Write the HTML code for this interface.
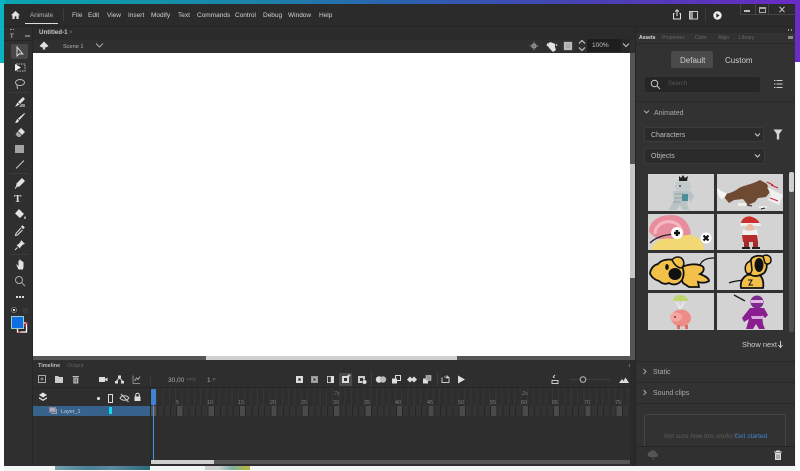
<!DOCTYPE html>
<html><head><meta charset="utf-8"><style>
html,body{margin:0;padding:0}
body{width:800px;height:471px;overflow:hidden;position:relative;background:#f4f5f5;font-family:"Liberation Sans",sans-serif;color:#bbb}
div,span,svg{position:absolute}
#w{left:0;top:0;width:800px;height:471px;filter:blur(.35px);overflow:hidden}
.t{white-space:nowrap;line-height:10px}
.m{font-size:6.5px;color:#d2d2d2;top:10.500px}
.th{background:#d3d3d3;overflow:hidden}
.ic{fill:#e2e2e2;stroke:none}
.st{fill:none;stroke:#e2e2e2;stroke-width:1}
.r{font-size:5.500px;color:#7d7d7d;top:397.500px}
</style></head><body><div id="w">
<div style="left:0;top:0;width:800px;height:5px;background:linear-gradient(90deg,#0aa5b0 0,#1a86a8 30%,#2c62b0 50%,#4a3fb4 75%,#6a2bc4 100%)"></div>
<div style="left:0;top:0;width:5px;height:63px;background:#08b4c4"></div>
<div style="left:795px;top:0;width:5px;height:62px;background:#6a2bc8"></div>
<div style="left:0;top:63px;width:4px;height:408px;background:#fdfdfd"></div>
<div style="left:796px;top:62px;width:4px;height:409px;background:#fdfdfd"></div>
<!-- bottom strip -->
<div style="left:55px;top:465px;width:95px;height:4.500px;background:linear-gradient(90deg,#7ba0ac,#4a8098 35%,#5d8aa0 60%,#2d6a78)"></div>
<div style="left:205px;top:465px;width:45px;height:4.500px;background:linear-gradient(100deg,#d0d0d0 30%,#7db0a8 60%,#b5b548 90%)"></div>
<!-- window -->
<div style="left:4px;top:4px;width:791px;height:461.500px;background:#2f2f2f"></div>
<div style="left:4px;top:4px;width:791px;height:23px;background:#2b2b2b"></div>
<div style="left:4px;top:26px;width:791px;height:1px;background:#242424"></div>
<!-- title bar -->
<svg style="left:10px;top:10px" width="11" height="10" viewBox="0 0 11 10"><path class="ic" d="M5.500 1L1 5.200h1.400V9h2.200V6.400h1.800V9h2.200V5.200H10z"/></svg>
<span class="t" style="left:30px;top:10.500px;font-size:6.300px;color:#b5b5b5">Animate</span>
<div style="left:25px;top:23px;width:33px;height:1px;background:#ddd"></div>
<div style="left:63px;top:9px;width:1px;height:12px;background:#3c3c3c"></div>
<span class="t m" style="left:72px">File</span>
<span class="t m" style="left:88px">Edit</span>
<span class="t m" style="left:107px">View</span>
<span class="t m" style="left:128px">Insert</span>
<span class="t m" style="left:151px">Modify</span>
<span class="t m" style="left:178px">Text</span>
<span class="t m" style="left:197px">Commands</span>
<span class="t m" style="left:235px">Control</span>
<span class="t m" style="left:263px">Debug</span>
<span class="t m" style="left:288px">Window</span>
<span class="t m" style="left:319px">Help</span>
<svg style="left:672px;top:9px" width="10" height="11" viewBox="0 0 10 11"><path class="st" d="M2.500 4.500H1.500v5.500h7V4.500H7.500M5 7V1M3.200 2.600L5 .8l1.800 1.800"/></svg>
<svg style="left:689px;top:11px" width="10" height="9" viewBox="0 0 10 9"><rect x=".5" y=".5" width="8" height="7.500" fill="none" stroke="#ccc"/><rect x="1" y="1" width="3" height="6.500" fill="#999"/></svg>
<div style="left:705px;top:8px;width:1px;height:14px;background:#3a3a3a"></div>
<svg style="left:713px;top:11px" width="9" height="9" viewBox="0 0 9 9"><circle cx="4.500" cy="4.500" r="4.200" fill="#eee"/><path d="M3.300 2.300v4.400l3.300-2.200z" fill="#2b2b2b"/></svg>
<div style="left:740px;top:4px;width:55px;height:10px;border-bottom:1px solid #444;border-left:1px solid #444"></div>
<div style="left:744px;top:10px;width:6px;height:1.500px;background:#bbb"></div>
<div style="left:755px;top:4px;width:1px;height:10px;background:#444"></div>
<div style="left:768px;top:4px;width:1px;height:10px;background:#444"></div>
<div style="left:759px;top:7px;width:5px;height:3px;border:1px solid #aaa;border-top-width:2px"></div>
<svg style="left:778px;top:6px" width="8" height="7" viewBox="0 0 8 7"><path d="M1.500 .8l5 5.400M6.500 .8l-5 5.400" stroke="#ccc" fill="none"/></svg>
<!-- toolbar -->
<div style="left:4px;top:27px;width:29px;height:439px;background:#2f2f2f"></div>
<div style="left:32px;top:27px;width:1px;height:439px;background:#262626"></div>
<div style="left:4px;top:40px;width:28px;height:1px;background:#262626"></div>
<div style="left:10px;top:29px;width:4px;height:1px;border-top:1px dotted #999"></div>
<span class="t" style="left:10px;top:32px;font-size:6px;font-weight:bold;color:#aaa">T</span>
<div style="left:25px;top:35px;width:5px;height:2px;background:#777"></div>
<div style="left:11px;top:44px;width:17px;height:15px;background:#484848;border-radius:2px"></div>
<svg style="left:14px;top:46px" width="12" height="12" viewBox="0 0 12 12"><path d="M3 1v9l2.500-2.200L8.800 8z" fill="none" stroke="#ddd"/></svg>
<svg style="left:14px;top:62px" width="13" height="11" viewBox="0 0 13 11"><rect x="2" y="2" width="9" height="7" fill="none" stroke="#bbb" stroke-dasharray="1.500 1"/><path d="M1 2l6 3.500L1 9z" fill="#eee"/></svg>
<svg style="left:14px;top:78px" width="12" height="12" viewBox="0 0 12 12"><ellipse cx="6" cy="4.500" rx="4.500" ry="3" fill="none" stroke="#bbb"/><path d="M3 7c-.5 2 1 2.500.5 4" fill="none" stroke="#bbb"/></svg>
<div style="left:9px;top:92px;width:20px;height:1px;background:#3a3a3a"></div>
<svg style="left:14px;top:96px" width="12" height="12" viewBox="0 0 12 12"><path class="ic" d="M9 1l2 2-5 5-2-2zM3.500 6.500l2 2L1 11z"/><path d="M7 8l4 0 0 3-6 0z" fill="#888"/></svg>
<svg style="left:14px;top:112px" width="12" height="12" viewBox="0 0 12 12"><path class="ic" d="M10.500 1L11 1.800 5.500 8 4 6.500zM3.500 7l1.500 1.500C4.500 10.500 2.500 11 1 11c1-.8 1-3 2.500-4z"/></svg>
<svg style="left:14px;top:127px" width="12" height="12" viewBox="0 0 12 12"><path class="ic" d="M7 1l4 4-3 3-4-4z"/><path d="M3.500 4.500l4 4-1.500 1.500H4L1.500 7.500z" fill="#aaa"/></svg>
<div style="left:15px;top:145px;width:9px;height:8px;background:#a3a3a3"></div>
<svg style="left:14px;top:158px" width="12" height="12" viewBox="0 0 12 12"><path d="M2 10.500L10 2.500" stroke="#ccc"/></svg>
<div style="left:9px;top:173px;width:20px;height:1px;background:#3a3a3a"></div>
<svg style="left:14px;top:177px" width="12" height="12" viewBox="0 0 12 12"><path class="ic" d="M8 1l3 3-5.500 5.500L2 10l.5-3.500z"/><path d="M1 11.500L4 8" stroke="#ddd"/></svg>
<span class="t" style="left:14px;top:194px;font-size:11px;line-height:11px;font-family:'Liberation Serif',serif;font-weight:bold;color:#ddd">T</span>
<svg style="left:14px;top:208px" width="13" height="12" viewBox="0 0 13 12"><path class="ic" d="M5 1l5 5-4 4-5-4.500zM11 8c1 1.500 1 3 0 3s-1-1.500 0-3z"/></svg>
<svg style="left:14px;top:224px" width="12" height="13" viewBox="0 0 12 13"><path class="ic" d="M8.500 1.200l2.300 2.300-1.600 1.600-2.300-2.300z"/><path d="M7 4L2 9.500 1.500 11.500l2-.5L8.500 6" fill="none" stroke="#ddd"/></svg>
<svg style="left:14px;top:239px" width="12" height="12" viewBox="0 0 12 12"><path class="ic" d="M7 1l4 4-2 .5L6.500 8 6 9.500 2.500 6 4 5.500 6.500 3z"/><path d="M3.500 8.500L1 11" stroke="#ddd"/></svg>
<div style="left:9px;top:254px;width:20px;height:1px;background:#3a3a3a"></div>
<svg style="left:14px;top:258px" width="12" height="13" viewBox="0 0 12 13"><path class="ic" d="M2 6l2.500 2V2.500h1V1.500h1v1h1V3h1v1h1v5L9 11.500H4.500z"/></svg>
<svg style="left:14px;top:275px" width="12" height="12" viewBox="0 0 12 12"><circle cx="5" cy="5" r="3.500" fill="none" stroke="#aaa"/><path d="M7.500 7.500L11 11" stroke="#aaa"/></svg>
<div style="left:16px;top:296px;width:2px;height:2px;background:#ddd"></div><div style="left:19px;top:296px;width:2px;height:2px;background:#ddd"></div><div style="left:22px;top:296px;width:2px;height:2px;background:#ddd"></div>
<div style="left:11px;top:307px;width:6px;height:6px;border-radius:50%;background:radial-gradient(#fff 35%,#222 40%);border:1px solid #777;box-sizing:border-box"></div>
<div style="left:23px;top:308px;width:5px;height:5px;background:#3a3a3a"></div>
<svg style="left:16px;top:320px" width="12" height="14" viewBox="0 0 12 14"><rect x="1.500" y="3" width="9" height="9" fill="#2a2a2a" stroke="#fff" stroke-width="1.300"/><path d="M11 2L7 8" stroke="#d22" stroke-width="1.200"/><path d="M5 11L2 13" stroke="#d22" stroke-width="1"/></svg>
<div style="left:11px;top:316px;width:11px;height:11px;background:#0f6fe0;border:.5px solid #9cc"></div>
<!-- document tab row -->
<div style="left:33px;top:27px;width:603px;height:13px;background:#2b2b2b"></div>
<span class="t" style="left:39px;top:27.500px;font-size:6.200px;font-weight:bold;color:#c8c8c8">Untitled-1</span>
<span class="t" style="left:69px;top:28px;font-size:6px;color:#777">×</span>
<!-- stage header -->
<svg style="left:39px;top:41px" width="10" height="10" viewBox="0 0 10 10"><path class="ic" d="M5 .5L7.500 3 9.500 5 7 6.500H5.700L6.500 8.500h-3l.8-2H3L.5 5 2.500 3z"/></svg>
<span class="t" style="left:63px;top:41.500px;font-size:5.600px;color:#b5b5b5">Scene 1</span>
<svg style="left:95px;top:42px" width="9" height="7" viewBox="0 0 9 7"><path d="M1 1.500L4.500 5 8 1.500" fill="none" stroke="#aaa"/></svg>
<svg style="left:529px;top:41px" width="10" height="10" viewBox="0 0 10 10"><circle cx="5" cy="5" r="2.700" fill="#999"/><path d="M5 .5v9M.5 5h9" stroke="#777"/></svg>
<svg style="left:546px;top:41px" width="12" height="11" viewBox="0 0 12 11"><path class="ic" d="M4 1l3 1 2 1v3l1 3-3 2-3-3-3-4z"/><path d="M2 2L1 5M10 3l1 2" stroke="#ddd"/></svg>
<div style="left:564px;top:42px;width:4px;height:4px;background:#aaa;border:2px solid #bbb;box-shadow:0 0 0 .5px #555"></div>
<svg style="left:578px;top:39px" width="8" height="13" viewBox="0 0 8 13"><path d="M1 4.500L4 1.500 7 4.500M1 8.500L4 11.500 7 8.500" fill="none" stroke="#ccc" stroke-width="1.100"/></svg>
<div style="left:587px;top:39px;width:34px;height:13px;background:#1e1e1e"></div>
<span class="t" style="left:592px;top:41px;font-size:6.500px;color:#c0c0c0">100%</span>
<div style="left:621px;top:39px;width:9px;height:13px;background:#262626"></div>
<svg style="left:622px;top:42px" width="8" height="7" viewBox="0 0 8 7"><path d="M1 1.500L4 4.500 7 1.500" fill="none" stroke="#ccc"/></svg>
<!-- stage -->
<div style="left:33px;top:53px;width:597px;height:303px;background:#fff"></div>
<!-- stage scrollbars -->
<div style="left:630px;top:53px;width:5px;height:303px;background:#555"></div>
<div style="left:630px;top:164px;width:5px;height:114px;background:#c8c8c8"></div>
<div style="left:33px;top:356px;width:602px;height:4px;background:#555"></div>
<div style="left:206px;top:356px;width:251px;height:4px;background:#cfcfcf"></div>
<!-- Timeline -->
<div style="left:33px;top:360px;width:603px;height:106px;background:#2e2e2e"></div>
<span class="t" style="left:38px;top:360.500px;font-size:5.500px;font-weight:bold;color:#bbb">Timeline</span>
<span class="t" style="left:67px;top:360.500px;font-size:5.500px;color:#5f5f5f">Output</span>
<div style="left:629px;top:364px;width:5px;height:3px;background:#666"></div>
<svg style="left:37px;top:374px" width="135" height="12" viewBox="0 0 135 12">
<rect x="1.500" y="1.500" width="7" height="7" fill="none" stroke="#aaa"/><path d="M5 3.500v3M3.500 5h3" stroke="#aaa"/>
<path d="M18 2h3l1 1h4v6h-8z" fill="#ccc"/>
<path d="M35.500 2.500h6.500" stroke="#bbb" stroke-width="1"/><path d="M36.300 3.500h5v6h-5z" fill="#bbb"/><path d="M38 4.500v4M39.700 4.500v4" stroke="#2e2e2e" stroke-width=".6"/>
<rect x="62" y="3" width="6" height="5" fill="#ddd"/><path d="M68 5l2.500-1.500v4L68 6z" fill="#ddd"/>
<path d="M81 1.500h3v2.500h-3zM78 7h3v2.500h-3zM84 7h3v2.500h-3z" fill="#ddd"/><path d="M82.500 4L79.500 7M82.500 4l3 3" stroke="#ddd"/>
<path d="M96 1.500v8h7" fill="none" stroke="#888"/><path d="M97.500 7l2-3 1.500 1.500L103 2.500" fill="none" stroke="#aaa"/>
</svg>
<div style="left:150px;top:376px;width:1px;height:10px;background:#3a3a3a"></div>
<span class="t" style="left:168px;top:376px;font-size:6.500px;color:#aaa">30,00</span>
<span class="t" style="left:187px;top:375px;font-size:4.500px;color:#666">FPS</span>
<span class="t" style="left:207px;top:376px;font-size:6.500px;color:#aaa">1</span>
<span class="t" style="left:213px;top:375px;font-size:4.500px;color:#888">F</span>
<div style="left:339px;top:373px;width:13px;height:13px;background:#4a4a4a;border-radius:1px"></div>
<div style="left:371px;top:372px;width:1px;height:14px;background:#3e3e3e"></div>
<div style="left:437px;top:372px;width:1px;height:14px;background:#3e3e3e"></div>
<svg style="left:295px;top:373px" width="340" height="13" viewBox="0 0 340 13">
<rect x="1" y="3" width="7" height="7" fill="#ddd"/><rect x="3.300" y="5.300" width="2.400" height="2.400" fill="#333"/>
<rect x="16" y="3" width="7" height="7" fill="#999"/><rect x="18" y="5" width="3" height="3" fill="#333" stroke="#ddd" stroke-width=".6"/>
<rect x="32" y="3" width="7" height="7" fill="#ddd"/><rect x="32.800" y="3.800" width="3" height="5.400" fill="#333"/>
<rect x="47" y="3" width="7" height="7" fill="#ddd"/><rect x="49" y="5" width="3" height="3" fill="#333"/><path d="M54 1v3M52.500 2.500h3" stroke="#ddd" stroke-width=".8"/>
<rect x="63" y="3" width="7" height="7" fill="#ccc"/><rect x="65" y="5" width="3" height="3" fill="#333"/><circle cx="69.500" cy="9" r="2.300" fill="#ddd" stroke="#333" stroke-width=".5"/>
<circle cx="84" cy="6.500" r="3.200" fill="#ddd"/><circle cx="88" cy="6.500" r="3.200" fill="#bbb"/>
<rect x="97" y="5.500" width="5" height="5" fill="#ddd"/><rect x="100.500" y="2.500" width="5" height="5" fill="none" stroke="#ddd"/>
<path d="M112 6.500l3-3 2 2 2-2 3 3-3 3-2-2-2 2z" fill="#ddd"/>
<rect x="128" y="5.500" width="5" height="5" fill="#ddd"/><rect x="131" y="2.500" width="5" height="5" fill="#999" stroke="#ddd" stroke-width=".5"/>
<path d="M147 4.500v5h7v-5h-3" fill="none" stroke="#ccc"/><path d="M149 4h4M151.500 2.500l2 1.500-2 1.500" fill="none" stroke="#ccc" stroke-width=".8"/>
<path d="M163 2.500v8l7-4z" fill="#ddd"/>
<path d="M258 4.500h1.500M258 4l2-2M257 7.500v3h6v-3z" fill="none" stroke="#ccc"/>
<path d="M275 6.500h10M291 6.500h24" stroke="#3f3f3f"/><circle cx="288" cy="6.500" r="2.800" fill="#2e2e2e" stroke="#bbb"/>
<path d="M324 10l3-4 1.500 2 2-3.500 3.500 5.500z" fill="#ddd"/>
</svg>
<!-- Layer panel -->
<div style="left:33px;top:387px;width:597px;height:1px;background:#272727"></div>
<svg style="left:38px;top:392px" width="10" height="10" viewBox="0 0 10 10"><path class="ic" d="M5 .5L9 3 5 5.500 1 3zM1 5l4 2.500L9 5v1.500L5 9 1 6.500z"/></svg>
<div style="left:97px;top:397px;width:2.500px;height:2.500px;border-radius:50%;background:#ddd"></div>
<div style="left:108px;top:394px;width:3px;height:7px;border:1px solid #ddd"></div>
<svg style="left:119px;top:393px" width="11" height="10" viewBox="0 0 11 10"><path d="M1 5c2-3 7-3 9 0-2 3-7 3-9 0zM2 1l7.500 8" fill="none" stroke="#ccc"/></svg>
<svg style="left:133px;top:392px" width="9" height="10" viewBox="0 0 9 10"><path d="M2.700 4.500V3a1.800 1.800 0 013.600 0v1.500" fill="none" stroke="#ddd"/><rect x="1.500" y="4.500" width="6" height="4.500" fill="#ddd"/></svg>
<div style="left:33px;top:406px;width:118px;height:10px;background:#37628c"></div>
<svg style="left:49px;top:407px" width="8" height="7" viewBox="0 0 8 7"><path d="M.5.500h6v4.500H.500z" fill="#aab" stroke="#889"/><path d="M2 6.500h5.500V2" fill="none" stroke="#99a"/></svg>
<span class="t" style="left:61px;top:407px;font-size:5.400px;color:#bcd">Layer_1</span>
<div style="left:109px;top:407px;width:3px;height:7px;background:#0fd8f0"></div>
<div style="left:150px;top:387px;width:1px;height:79px;background:#262626"></div>
<!-- frames ruler -->
<div style="left:151px;top:388px;width:479px;height:18px;background:repeating-linear-gradient(90deg,transparent 0,transparent 5.250px,#363636 5.250px,#363636 6.280px)"></div>
<div style="left:151px;top:406px;width:479px;height:10px;background:#343434"></div>
<div style="left:151px;top:406px;width:479px;height:10px;background:repeating-linear-gradient(90deg,transparent 0,transparent 25.100px,#4a4a4a 25.100px,#4a4a4a 31.400px)"></div>
<div style="left:151px;top:406px;width:479px;height:10px;background:repeating-linear-gradient(90deg,#262626 0,#262626 1px,transparent 1px,transparent 6.280px)"></div>
<span class="t" style="left:334px;top:389px;font-size:5.500px;font-style:italic;color:#777">7s</span>
<span class="t" style="left:522px;top:389px;font-size:5.500px;font-style:italic;color:#777">2s</span>
<span class="t r" style="left:176px">5</span>
<span class="t r" style="left:207px">10</span>
<span class="t r" style="left:238px">15</span>
<span class="t r" style="left:270px">20</span>
<span class="t r" style="left:301px">25</span>
<span class="t r" style="left:333px">30</span>
<span class="t r" style="left:364px">35</span>
<span class="t r" style="left:395px">40</span>
<span class="t r" style="left:427px">45</span>
<span class="t r" style="left:458px">50</span>
<span class="t r" style="left:490px">55</span>
<span class="t r" style="left:521px">60</span>
<span class="t r" style="left:552px">65</span>
<span class="t r" style="left:584px">70</span>
<span class="t r" style="left:615px">75</span>
<!-- playhead -->
<div style="left:151px;top:389px;width:5px;height:16px;background:#3f82d0;border-radius:1px"></div>
<div style="left:151px;top:406px;width:5px;height:10px;background:#555"></div>
<div style="left:153px;top:405px;width:1px;height:55px;background:#4a90e0"></div>
<!-- timeline scroll -->
<div style="left:151px;top:460px;width:479px;height:4px;background:#555"></div>
<div style="left:151px;top:460px;width:63px;height:4px;background:#cfcfcf"></div>
<div style="left:630px;top:360px;width:5px;height:106px;background:#2a2a2a"></div>
<!-- right panel -->
<div style="left:636px;top:27px;width:159px;height:438.500px;background:#323232"></div>
<div style="left:635px;top:27px;width:1px;height:438.500px;background:#262626"></div>
<div style="left:636px;top:27px;width:159px;height:6px;background:#2b2b2b"></div>
<div style="left:636px;top:43px;width:159px;height:1px;background:#272727"></div>
<div style="left:788px;top:29px;width:1px;height:2px;background:#999"></div><div style="left:791px;top:29px;width:1px;height:2px;background:#999"></div>
<div style="left:788px;top:36px;width:5px;height:3px;background:#888"></div>
<span class="t" style="left:639px;top:32.500px;font-size:5px;font-weight:bold;color:#ddd">Assets</span>
<span class="t" style="left:662px;top:32.500px;font-size:5px;color:#666">Properties</span>
<span class="t" style="left:695px;top:32.500px;font-size:5px;color:#666">Color</span>
<span class="t" style="left:718px;top:32.500px;font-size:5px;color:#666">Align</span>
<span class="t" style="left:739px;top:32.500px;font-size:5px;color:#666">Library</span>
<div style="left:671px;top:51px;width:42px;height:17px;background:#4a4a4a;border-radius:2px"></div>
<span class="t" style="left:680px;top:55.500px;font-size:8px;color:#ccc">Default</span>
<span class="t" style="left:725px;top:55.500px;font-size:8px;color:#ccc">Custom</span>
<div style="left:645px;top:77px;width:115px;height:15px;background:#262626;border-radius:2px"></div>
<svg style="left:650px;top:79px" width="11" height="11" viewBox="0 0 11 11"><circle cx="4.500" cy="4.500" r="3.300" fill="none" stroke="#ccc"/><path d="M7 7l3 3" stroke="#ccc"/></svg>
<span class="t" style="left:668px;top:79px;font-size:6px;color:#555">Search</span>
<svg style="left:773px;top:79px" width="10" height="11" viewBox="0 0 10 11"><path d="M1 1.500h1.500M1 5h1.500M1 8.500h1.500M3.500 1.500h6M3.500 5h6M3.500 8.500h6" stroke="#ccc" stroke-width="1.100"/></svg>
<div style="left:636px;top:101px;width:159px;height:1px;background:#292929"></div>
<svg style="left:643px;top:109px" width="7" height="6" viewBox="0 0 7 6"><path d="M1 1.500L3.500 4 6 1.500" fill="none" stroke="#aaa"/></svg>
<span class="t" style="left:654px;top:108.500px;font-size:7px;color:#aaa">Animated</span>
<div style="left:644px;top:127px;width:120px;height:15px;background:#2b2b2b;border:1px solid #3b3b3b;box-sizing:border-box;border-radius:2px"></div>
<span class="t" style="left:651px;top:130.500px;font-size:7px;color:#bbb">Characters</span>
<svg style="left:754px;top:132px" width="7" height="6" viewBox="0 0 7 6"><path d="M1 1.500L3.500 4 6 1.500" fill="none" stroke="#ccc" stroke-width="1.100"/></svg>
<svg style="left:773px;top:129px" width="10" height="11" viewBox="0 0 10 11"><path d="M.5 .5h9L6.200 5v5.500H3.800V5z" fill="#d5d5d5"/></svg>
<div style="left:644px;top:148px;width:121px;height:16px;background:#2b2b2b;border:1px solid #3b3b3b;box-sizing:border-box;border-radius:2px"></div>
<span class="t" style="left:651px;top:151.500px;font-size:7px;color:#bbb">Objects</span>
<svg style="left:754px;top:153px" width="7" height="6" viewBox="0 0 7 6"><path d="M1 1.500L3.500 4 6 1.500" fill="none" stroke="#ccc" stroke-width="1.100"/></svg>
<!-- thumbs -->
<div class="th" style="left:648px;top:174px;width:66px;height:37px"><svg width="66" height="37" viewBox="0 0 66 37" style="left:0;top:0">
<path d="M31 2l2 2 2-3 2 3 3-2-1 5h-8z" fill="#222"/><rect x="27" y="7" width="16" height="10" rx="4" fill="#c3cbcd"/><circle cx="32" cy="12" r="1" fill="#444"/><path d="M25 17h17l4 5-3 6-3-4-1 6 2 6h-6l-3-5-4 5h-7l5-10-1-6z" fill="#b9c2c4"/><rect x="34" y="20" width="6" height="7" fill="#4b8f96"/><path d="M27 20h9M26 24h8M25 28h8" stroke="#8a9698" stroke-width=".7"/></svg></div>
<div class="th" style="left:717px;top:174px;width:66px;height:37px"><svg width="66" height="37" viewBox="0 0 66 37" style="left:0;top:0">
<path d="M8 20c6-1 10-3 14-6 6-3 14-4 21-8l7 4 3 8-4 5-8 1-3 4-7 3-5-6-9 1-5 3-5-6z" fill="#6e4a33"/><path d="M0 14c3 2 7 5 10 5-1 3-3 6-5 6-3-1-5-6-5-11z" fill="#f4f4f4"/><path d="M50 13l16 8-4 10-11-5 3-5z" fill="#f0f0f0"/><path d="M50 8l6 3M54 11l7 3M53 24l8 3" stroke="#c23" stroke-width="1.200"/><path d="M21 29h8v3h-8zM42 32h8v2h-8z" fill="#eee"/><path d="M30 31l5 1M44 35l4-1" stroke="#222" stroke-width="1"/></svg></div>
<div class="th" style="left:648px;top:214px;width:66px;height:36px"><svg width="66" height="36" viewBox="0 0 66 36" style="left:0;top:0">
<path d="M1 18C1 7 11 1 23 1c12 0 18 8 20 18l-4 6H9z" fill="#e88d9e"/><path d="M7 20C7 12 15 6 24 8c6 1 10 6 10 12" fill="none" stroke="#f5b7c1" stroke-width="3"/><path d="M3 36c2-9 12-13 22-11 12-6 24-6 30 5l1 6z" fill="#f2d872"/><path d="M2 29c6-6 14-8 24-9" stroke="#222" stroke-width="1.300" fill="none"/><circle cx="29" cy="19" r="6" fill="#fff"/><path d="M26 19h6M29 16v6" stroke="#111" stroke-width="2.500"/><circle cx="58" cy="24" r="5.500" fill="#fff"/><path d="M55.500 21.500l5 5M60.500 21.500l-5 5" stroke="#111" stroke-width="2.200"/></svg></div>
<div class="th" style="left:717px;top:214px;width:66px;height:36px"><svg width="66" height="36" viewBox="0 0 66 36" style="left:0;top:0">
<path d="M24 10c0-6 7-9 11-7 4 1 7 4 8 7z" fill="#c9302c"/><rect x="23" y="9" width="21" height="3" rx="1.500" fill="#eee"/><circle cx="33" cy="14" r="4" fill="#eebba0"/><path d="M26 15c2 2 11 2 14 0l1 7-8 3-8-3z" fill="#f0f0f0"/><path d="M25 21h15l1 7H26z" fill="#b52a2a"/><path d="M27 28h5v5h-5zM36 28h5v5h-5z" fill="#a22a2a"/><path d="M25 33h8v2h-8zM35 33h8v2h-8z" fill="#222"/></svg></div>
<div class="th" style="left:648px;top:253px;width:66px;height:37px"><svg width="66" height="37" viewBox="0 0 66 37" style="left:0;top:0">
<path d="M52 12c2-5 7-7 14-7" fill="none" stroke="#111" stroke-width="1.200"/>
<path d="M30 16c8-5 18-6 24-3 3 2 2 6-2 8 5 2 9 4 9 7-3 2-8 2-11 1l1 5h-10l-6-4z" fill="#f3c04a" stroke="#111" stroke-width="1.800"/>
<path d="M2 20c1-5 4-8 8-9 4-5 14-6 20-2 6 4 7 12 4 18-3 4-8 6-13 3-4 2-8 0-10-2-4-1-8-4-9-8z" fill="#f3c04a" stroke="#111" stroke-width="1.800"/>
<path d="M24 7c3-4 9-4 11 0 2 4 0 8-3 8-3-1-6-4-8-8z" fill="#f3c04a" stroke="#111" stroke-width="1.500"/>
<ellipse cx="27" cy="21" rx="6.500" ry="6" fill="#111"/><ellipse cx="19" cy="14" rx="1.800" ry="3" fill="#111"/></svg></div>
<div class="th" style="left:717px;top:253px;width:66px;height:37px"><svg width="66" height="37" viewBox="0 0 66 37" style="left:0;top:0">
<path d="M12 30c4-2 9-2 14-3" fill="none" stroke="#111" stroke-width="1.200"/>
<path d="M24 35c-1-6 1-10 6-13l12-1c4 4 5 9 4 14z" fill="#f3c04a" stroke="#111" stroke-width="1.800"/>
<path d="M34 22c-3-5-3-12 1-17 4-3 10-3 13 0 3 5 2 12-1 15-4 3-9 4-13 2z" fill="#f3c04a" stroke="#111" stroke-width="1.800"/>
<path d="M34 8c-5 1-7 6-5 11 2 3 5 2 6-2z" fill="#f3c04a" stroke="#111" stroke-width="1.500"/>
<path d="M46 3c4-2 8 0 8 4s-4 5-6 3z" fill="#f3c04a" stroke="#111" stroke-width="1.500"/>
<ellipse cx="42" cy="12" rx="4.500" ry="7" fill="#111"/>
<path d="M31 27h4l-3 5h4" fill="none" stroke="#111" stroke-width="1"/></svg></div>
<div class="th" style="left:648px;top:293px;width:66px;height:37px"><svg width="66" height="37" viewBox="0 0 66 37" style="left:0;top:0">
<path d="M25 8c0-4 4-6 7-6s8 2 8 6z" fill="#bdd66c"/><path d="M27 8l5 8 6-8M30 8l2 8 3-8" stroke="#eee" stroke-width=".8" fill="none"/><ellipse cx="33" cy="25" rx="10" ry="8.500" fill="#ee8d88"/><ellipse cx="28" cy="24" rx="6" ry="4.500" fill="#f4a8a2"/><circle cx="27" cy="24" r="1" fill="#933"/><path d="M29 32h3v4h-3zM37 32h3v4h-3z" fill="#d96d68"/></svg></div>
<div class="th" style="left:717px;top:293px;width:66px;height:37px"><svg width="66" height="37" viewBox="0 0 66 37" style="left:0;top:0">
<path d="M17 2l11 6" stroke="#222" stroke-width="1.500"/><circle cx="40" cy="9" r="6.500" fill="#7c2c8c"/><rect x="34" y="7" width="12" height="3" fill="#e3b5e3"/><path d="M33 15h14l4 7-3 3-3-3 1 9 2 5h-6l-3-5-3 5h-7l3-10-5 3-2-4z" fill="#8a1e91"/><path d="M34 23h12l-1 3H35z" fill="#d7a8db"/></svg></div>
<div style="left:789px;top:172px;width:5px;height:160px;background:#4e4e4e;border-radius:2px"></div>
<div style="left:789px;top:172px;width:5px;height:20px;background:#cfcfcf;border-radius:2px"></div>
<span class="t" style="left:742px;top:340px;font-size:7.500px;color:#ccc">Show next</span>
<svg style="left:777px;top:340px" width="7" height="9" viewBox="0 0 7 9"><path d="M3.500 1v6M1.500 5l2 2.500L5.500 5" fill="none" stroke="#ccc"/></svg>
<div style="left:636px;top:361px;width:159px;height:1px;background:#292929"></div>
<svg style="left:642px;top:368px" width="6" height="7" viewBox="0 0 6 7"><path d="M1.500 1L4 3.500 1.500 6" fill="none" stroke="#aaa"/></svg>
<span class="t" style="left:653px;top:367.500px;font-size:7px;color:#aaa">Static</span>
<div style="left:636px;top:382px;width:159px;height:1px;background:#292929"></div>
<svg style="left:642px;top:389px" width="6" height="7" viewBox="0 0 6 7"><path d="M1.500 1L4 3.500 1.500 6" fill="none" stroke="#aaa"/></svg>
<span class="t" style="left:653px;top:388.500px;font-size:7px;color:#aaa">Sound clips</span>
<div style="left:636px;top:403px;width:159px;height:1px;background:#292929"></div>
<div style="left:644px;top:414px;width:142px;height:33px;border:1px solid #454545;border-bottom:none;box-sizing:border-box;border-radius:3px 3px 0 0"></div>
<span class="t" style="left:664px;top:431.500px;font-size:6.500px;font-style:italic;color:#5f5f5f">Not sure how this works?</span>
<span class="t" style="left:735px;top:431.500px;font-size:6.500px;color:#3f85cc">Get started</span>
<div style="left:636px;top:446px;width:159px;height:19.500px;background:#303030;border-top:1px solid #252525;box-sizing:border-box"></div>
<svg style="left:647px;top:450px" width="12" height="11" viewBox="0 0 12 11"><path d="M3 7a2.500 2.500 0 01.300-5A3 3 0 019 3a2 2 0 010 4z" fill="#555"/><path d="M6 4v6M4.500 6L6 4.500 7.500 6" stroke="#555" fill="none"/></svg>
<svg style="left:773px;top:450px" width="10" height="11" viewBox="0 0 10 11"><path d="M1 2h8M3.500 2V1h3v1" stroke="#ddd" fill="none"/><path d="M2 3h6v7H2z" fill="#ddd"/><path d="M4 4.500V9M6 4.500V9" stroke="#333" stroke-width=".6"/></svg>
</div></body></html>
